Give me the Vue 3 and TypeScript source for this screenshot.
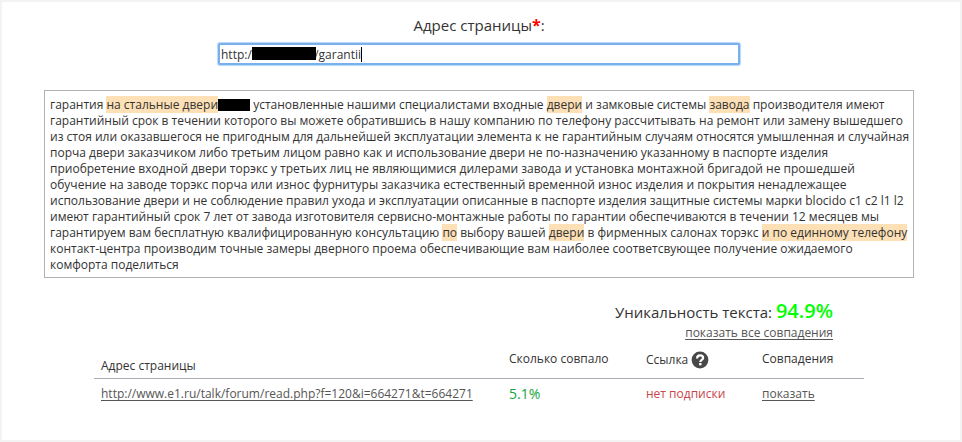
<script setup lang="ts">
import { ref } from 'vue'

interface Part {
  text: string
  kind?: 'match' | 'hidden'
}

interface Result {
  url: string
  percent: string
  link: string
}

const address = ref('http:/' + '\u00a0'.repeat(20) + '/garantii')

const lines: Part[][] = [
  [
    { text: 'гарантия ' },
    { text: 'на стальные двери', kind: 'match' },
    { text: '', kind: 'hidden' },
    { text: ' установленные нашими специалистами входные ' },
    { text: 'двери', kind: 'match' },
    { text: ' и замковые системы ' },
    { text: 'завода', kind: 'match' },
    { text: ' производителя имеют' },
  ],
  [{ text: 'гарантийный срок в течении которого вы можете обратившись в нашу компанию по телефону рассчитывать на ремонт или замену вышедшего' }],
  [{ text: 'из стоя или оказавшегося не пригодным для дальнейшей эксплуатации элемента к не гарантийным случаям относятся умышленная и случайная' }],
  [{ text: 'порча двери заказчиком либо третьим лицом равно как и использование двери не по-назначению указанному в паспорте изделия' }],
  [{ text: 'приобретение входной двери торэкс у третьих лиц не являющимися дилерами завода и установка монтажной бригадой не прошедшей' }],
  [{ text: 'обучение на заводе торэкс порча или износ фурнитуры заказчика естественный временной износ изделия и покрытия ненадлежащее' }],
  [{ text: 'использование двери и не соблюдение правил ухода и эксплуатации описанные в паспорте изделия защитные системы марки blocido c1 c2 l1 l2' }],
  [{ text: 'имеют гарантийный срок 7 лет от завода изготовителя сервисно-монтажные работы по гарантии обеспечиваются в течении 12 месяцев мы' }],
  [
    { text: 'гарантируем вам бесплатную квалифицированную консультацию ' },
    { text: 'по', kind: 'match' },
    { text: ' выбору вашей ' },
    { text: 'двери', kind: 'match' },
    { text: ' в фирменных салонах торэкс ' },
    { text: 'и по единному телефону', kind: 'match' },
  ],
  [{ text: 'контакт-центра производим точные замеры дверного проема обеспечивающие вам наиболее соответсвующее получение ожидаемого' }],
  [{ text: 'комфорта поделиться' }],
]

const results: Result[] = [
  { url: 'http://www.e1.ru/talk/forum/read.php?f=120&i=664271&t=664271', percent: '5.1%', link: 'нет подписки' },
]
</script>

<template>
  <main class="page">
    <form class="address" @submit.prevent>
      <label class="address-label" for="address">Адрес страницы<span class="required">*</span>:</label>
      <div class="field">
        <input id="address" v-model="address" class="address-input" type="text" spellcheck="false" />
        <span class="field-mask"></span>
        <span class="caret"></span>
      </div>
    </form>

    <section class="checked">
      <p v-for="(line, i) in lines" :key="i" class="line">
        <template v-for="(part, j) in line" :key="j">
          <mark v-if="part.kind === 'match'" class="match">{{ part.text }}</mark>
          <span v-else-if="part.kind === 'hidden'" class="hidden-word"></span>
          <template v-else>{{ part.text }}</template>
        </template>
      </p>
    </section>

    <section class="report">
      <div class="summary">
        <p class="score">Уникальность текста: <strong class="score-value">94.9%</strong></p>
        <a class="link" href="#all">показать все совпадения</a>
      </div>

      <table class="results">
        <colgroup>
          <col />
          <col class="col-percent" />
          <col class="col-link" />
          <col class="col-show" />
        </colgroup>
        <thead>
          <tr>
            <th class="low" scope="col">Адрес страницы</th>
            <th scope="col">Сколько совпало</th>
            <th scope="col">
              <span class="with-help">
                Ссылка
                <svg class="help" viewBox="0 0 18 18" aria-hidden="true">
                  <circle cx="9" cy="9" r="8.4" fill="#484848" />
                  <path d="M6.1 7.4C6.1 5.4 7.3 4.4 9.1 4.4s3 1 3 2.5c0 2.1-2.8 2-2.8 4.2" fill="none" stroke="#fff" stroke-width="2.2" />
                  <rect x="8.1" y="12" width="2.4" height="2.3" fill="#fff" />
                </svg>
              </span>
            </th>
            <th scope="col">Совпадения</th>
          </tr>
        </thead>
        <tbody>
          <tr v-for="row in results" :key="row.url">
            <td><a class="link" :href="row.url">{{ row.url }}</a></td>
            <td class="percent">{{ row.percent }}</td>
            <td class="denied">{{ row.link }}</td>
            <td><a class="link" href="#show">показать</a></td>
          </tr>
        </tbody>
      </table>
    </section>
  </main>
</template>

<style>
body {
  margin: 0;
  background: #fff;
}
</style>

<style scoped>
.page {
  box-sizing: border-box;
  min-height: 100vh;
  padding: 12px 46px 24px 42px;
  border: 2px solid #f3f3f3;
  background: #fff;
  color: #333;
  font-family: "Open Sans", "Noto Sans", sans-serif;
  font-size: 12px;
  line-height: 16px;
}

.address {
  display: flex;
  flex-direction: column;
  align-items: center;
  gap: 7px;
}

.address-label {
  font-size: 15px;
  line-height: 22px;
}

.required {
  color: #f00;
  font-size: 16px;
  font-weight: 700;
  line-height: 16px;
}

.field {
  position: relative;
  width: 60%;
}

.address-input {
  display: block;
  box-sizing: border-box;
  width: 100%;
  height: 22px;
  padding: 0 1px;
  border: 2px solid #78b0ee;
  border-radius: 2px;
  outline: none;
  box-shadow: 0 0 1px 1px #b5d7fa;
  background: #fff;
  color: #333;
  font: inherit;
}

.field-mask {
  position: absolute;
  top: 4px;
  left: 34px;
  width: 64px;
  height: 13px;
  background: #000;
}

.caret {
  position: absolute;
  top: 4px;
  left: 143px;
  width: 1px;
  height: 15px;
  background: #000;
}

.checked {
  margin-top: 25px;
  padding: 6px 0 4px 5px;
  border: 1px solid #b0b3b8;
}

.line {
  margin: 0;
}

.match {
  background: #fde0b5;
  color: inherit;
}

.hidden-word {
  display: inline-block;
  width: 32px;
  height: 12px;
  background: #000;
  vertical-align: -2px;
}

.report {
  width: 770px;
  max-width: 100%;
  margin: 20px auto 0;
}

.summary {
  display: flex;
  flex-direction: column;
  align-items: flex-end;
  padding-right: 31px;
}

.score {
  margin: 0;
  font-size: 15px;
  line-height: 26px;
}

.score-value {
  color: #0f0;
  font-size: 20px;
  font-weight: 600;
}

.link {
  color: #555;
  text-decoration: underline;
  text-decoration-skip-ink: none;
  text-underline-offset: 2px;
}

.results {
  width: 100%;
  margin-top: 10px;
  border-collapse: collapse;
  table-layout: fixed;
}

.col-percent {
  width: 137px;
}

.col-link {
  width: 116px;
}

.col-show {
  width: 109px;
}

th,
td {
  padding: 0 7px;
  text-align: left;
  font-weight: 400;
}

th {
  height: 27px;
  border-bottom: 1px solid #a9adb3;
  vertical-align: top;
}

th.low {
  height: 23px;
  padding-bottom: 4px;
  vertical-align: bottom;
}

td {
  padding-top: 7px;
}

.with-help {
  display: flex;
  align-items: center;
  gap: 3px;
}

.help {
  width: 18px;
  height: 18px;
}

.percent {
  color: #17a63a;
  font-size: 14px;
}

.denied {
  color: #c8454a;
}
</style>
